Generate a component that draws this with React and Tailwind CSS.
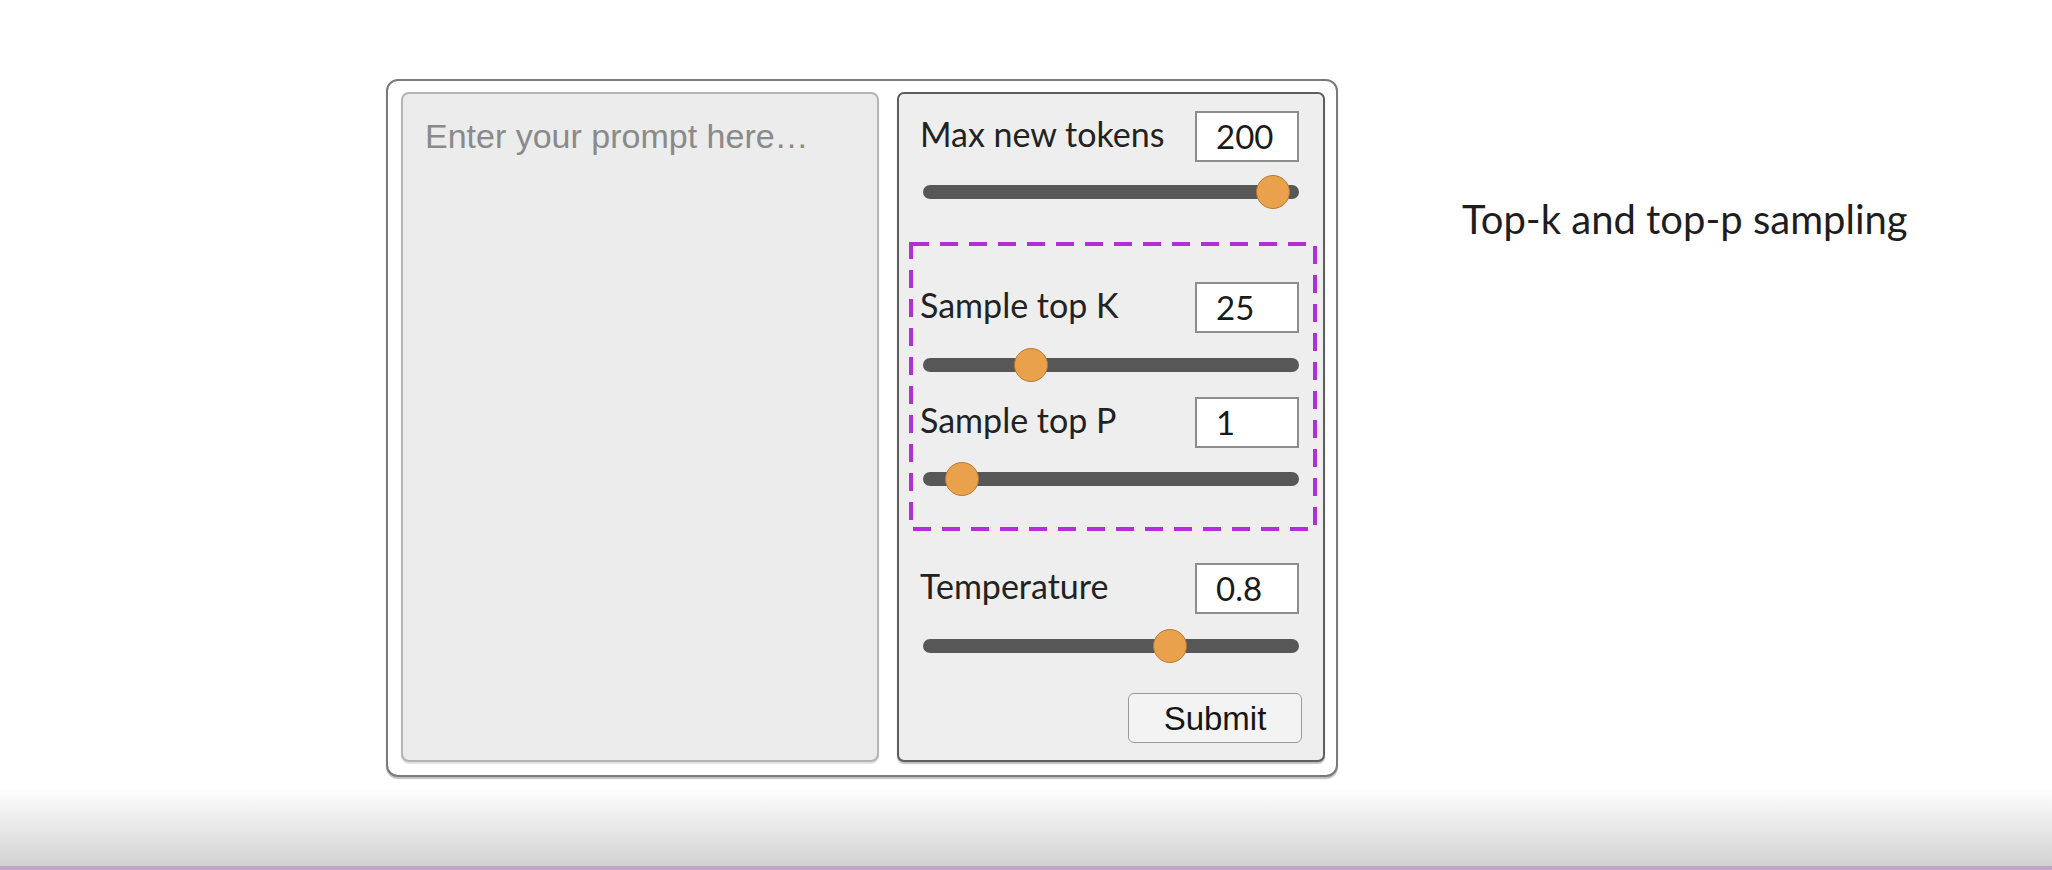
import React from "react";

const lato = "font-['Lato',sans-serif]";
const arial = "font-['Liberation_Sans',Arial,sans-serif]";

function Row({ label, value }) {
  return (
    <div className="flex h-[51px] w-[379px] items-center justify-between">
      <span className={`${lato} pb-[6px] text-[34px] leading-none text-[#222]`}>{label}</span>
      <div className={`${lato} flex h-[51px] w-[104px] items-center border-2 border-[#8d8d8d] bg-white pl-[19px] text-[33px] leading-none text-[#1a1a1a]`}>
        {value}
      </div>
    </div>
  );
}

function Slider({ pos }) {
  return (
    <div className="relative ml-[3px] flex h-[34px] w-[376px] items-center">
      <div className="h-[14px] w-full rounded-full bg-[#575757]" />
      <div
        className="absolute top-0 h-[34px] w-[34px] -translate-x-1/2 rounded-full border-[1.5px] border-[#b47b38] bg-[#e9a14c]"
        style={{ left: `${pos}px` }}
      />
    </div>
  );
}

export default function App() {
  return (
    <div className="flex h-[870px] w-[2052px] flex-col overflow-hidden bg-white">
      <div className="flex items-start pl-[386px] pt-[79px]">
        {/* demo window */}
        <div className="flex h-[698px] w-[952px] gap-[18px] rounded-[12px] border-2 border-[#7a7a7a] bg-white pb-[13px] pl-[13px] pr-[11px] pt-[11px] shadow-[0_2px_1px_rgba(0,0,0,0.25)]">
          <textarea
            placeholder="Enter your prompt here…"
            className={`${arial} w-[478px] resize-none rounded-[8px] border-2 border-[#b4b4b4] bg-[#ececec] pl-[22px] pt-[17px] text-[34px] text-[#333] shadow-[0_2px_1px_rgba(0,0,0,0.12)] outline-none placeholder:text-[#8a8a8a]`}
          />

          <div className="flex flex-1 flex-col rounded-[7px] border-2 border-[#5e5e5e] bg-[#eeeeee] pt-[17px] shadow-[0_2px_1px_rgba(0,0,0,0.25)]">
            <div className="ml-[21px]">
              <Row label="Max new tokens" value="200" />
              <div className="mt-[13px]">
                <Slider pos={350} />
              </div>
            </div>

            {/* highlighted group */}
            <div className="relative ml-[10px] mt-[33px] h-[289px] w-[408px] pl-[11px] pt-[40px]">
              <svg className="absolute left-0 top-0" width="408" height="289" viewBox="0 0 408 289">
                <rect x="2" y="2" width="404" height="285" fill="none" stroke="#b22fd6" strokeWidth="4" strokeDasharray="18 11" />
              </svg>
              <Row label="Sample top K" value="25" />
              <div className="mt-[15px]">
                <Slider pos={108} />
              </div>
              <div className="mt-[15px]">
                <Row label="Sample top P" value="1" />
              </div>
              <div className="mt-[14px]">
                <Slider pos={39} />
              </div>
            </div>

            <div className="ml-[21px] mt-[32px]">
              <Row label="Temperature" value="0.8" />
              <div className="mt-[15px]">
                <Slider pos={247} />
              </div>
            </div>

            <button
              className={`${arial} mr-[21px] mt-[30px] h-[50px] w-[174px] self-end rounded-[6px] border-[1.5px] border-[#9a9a9a] bg-[#f3f3f3] text-[33px] leading-none text-[#151515]`}
            >
              Submit
            </button>
          </div>
        </div>

        <h2 className={`${lato} ml-[124px] mt-[120px] text-[40px] font-normal leading-none text-[#1e1e1e]`}>
          Top-k and top-p sampling
        </h2>
      </div>

      <div className="mt-auto h-[78px] bg-linear-to-b from-white to-[#d2d2d2]" />
      <div className="h-[4px] bg-[#bda6ca]" />
    </div>
  );
}
